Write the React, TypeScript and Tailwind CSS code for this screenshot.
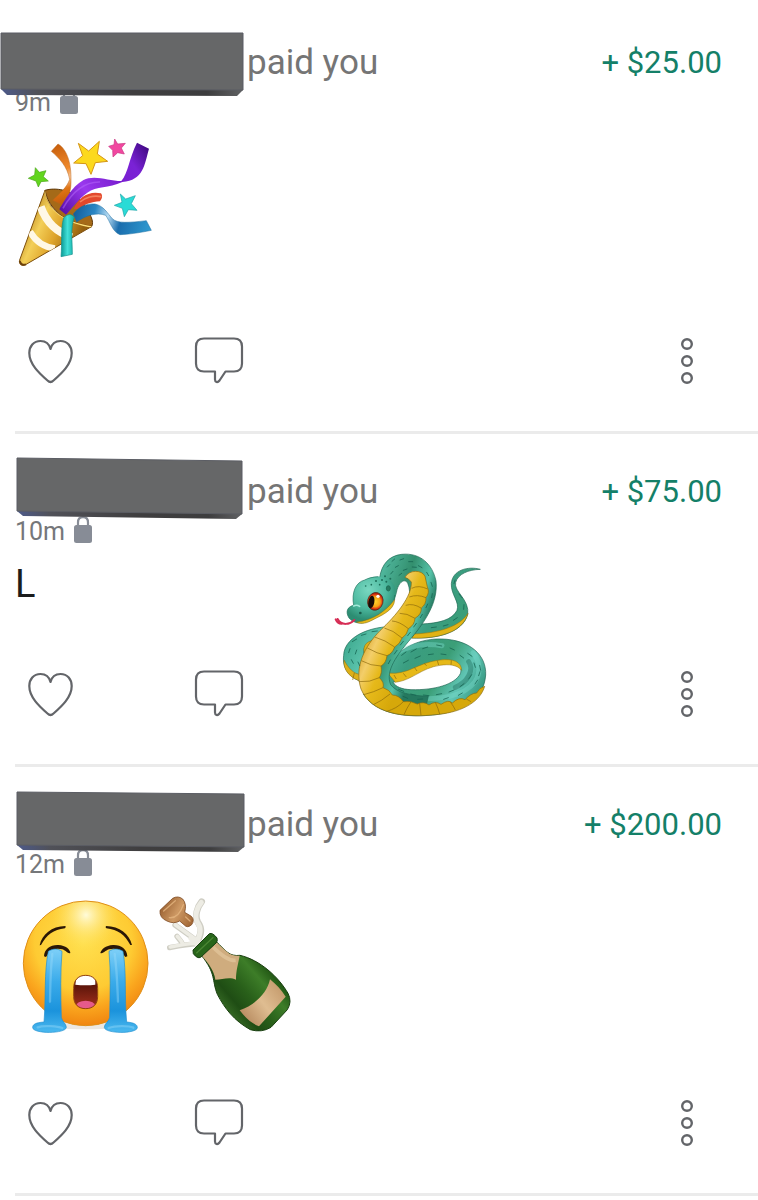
import React from 'react';

interface Payment {
  id: number;
  age: string;
  amount: string;
  message: React.ReactNode;
  redaction: React.ReactNode;
  sticker?: React.ReactNode;
}

const PartyPopper = () => (
  <svg role="img" aria-label="Party popper" width="141" height="144" viewBox="45 -3 423 432">
    <defs>
      <linearGradient id="cone" x1="70" y1="270" x2="230" y2="340" gradientUnits="userSpaceOnUse">
        <stop offset="0" stopColor="#b9831c" />
        <stop offset="0.3" stopColor="#f3cf58" />
        <stop offset="0.6" stopColor="#dfa52b" />
        <stop offset="1" stopColor="#94600f" />
      </linearGradient>
      <linearGradient id="orangeRibbon" x1="155" y1="50" x2="215" y2="230" gradientUnits="userSpaceOnUse">
        <stop offset="0" stopColor="#c85f0c" />
        <stop offset="0.4" stopColor="#f08a2c" />
        <stop offset="0.55" stopColor="#fbc89b" />
        <stop offset="0.7" stopColor="#e07414" />
        <stop offset="1" stopColor="#b65208" />
      </linearGradient>
      <linearGradient id="purpleRibbon" x1="180" y1="240" x2="440" y2="50" gradientUnits="userSpaceOnUse">
        <stop offset="0" stopColor="#5a10a8" />
        <stop offset="0.3" stopColor="#9a38ee" />
        <stop offset="0.6" stopColor="#7a1fd0" />
        <stop offset="0.8" stopColor="#7a22d6" />
        <stop offset="1" stopColor="#430a86" />
      </linearGradient>
      <linearGradient id="blueRibbon" x1="225" y1="240" x2="450" y2="300" gradientUnits="userSpaceOnUse">
        <stop offset="0" stopColor="#155f9c" />
        <stop offset="0.25" stopColor="#2a86c4" />
        <stop offset="0.43" stopColor="#b9dcf3" />
        <stop offset="0.6" stopColor="#1a6dad" />
        <stop offset="1" stopColor="#2f9ad0" />
      </linearGradient>
      <linearGradient id="tealRibbon" x1="185" y1="0" x2="220" y2="0" gradientUnits="userSpaceOnUse">
        <stop offset="0" stopColor="#0e9f9a" />
        <stop offset="0.5" stopColor="#43e0d8" />
        <stop offset="1" stopColor="#19b3ad" />
      </linearGradient>
      <clipPath id="coneClip">
        <path d="M135 181C140 235 185 275 276 289L75 405Q56 410 59 390Z" />
      </clipPath>
    </defs>
    <path d="M135 181C165 172 215 178 245 215C270 250 285 275 274 291C240 292 150 260 135 181Z" fill="#a56a18" stroke="#5d3708" strokeWidth="3" />
    <path d="M135 181C140 235 185 275 276 289L75 405Q56 410 59 390Z" fill="url(#cone)" stroke="#7d4e0c" strokeWidth="3" />
    <g clipPath="url(#coneClip)" fill="none" stroke="#fff8e6">
      <path d="M122 230C140 280 170 305 215 322" strokeWidth="24" />
      <path d="M90 305C110 340 135 352 165 355" strokeWidth="19" />
      <path d="M136 183C145 240 190 275 276 290" stroke="#ffe07a" strokeWidth="6" />
    </g>
    <path d="M59 393Q64 408 78 403" fill="none" stroke="#6d410c" strokeWidth="6" />
    <path d="M154 64L174 42C192 52 213 82 213 145C214 180 208 205 187 225L158 211C178 192 202 171 209 148C202 110 178 84 154 64Z" fill="url(#orangeRibbon)" stroke="#b8651b" strokeWidth="1.5" />
    <path d="M222 236C236 202 265 182 303 190Q311 200 300 214C275 215 252 224 234 238Z" fill="#e2482c" />
    <path d="M240 216C255 202 280 195 304 200" fill="none" stroke="#f5805c" strokeWidth="5" />
    <path d="M178 238C198 205 225 155 265 145C295 138 330 153 364 153C385 128 387 85 411 38L447 56C433 105 431 150 367 156C325 176 290 168 262 188C234 208 217 235 198 254Z" fill="url(#purpleRibbon)" />
    <path d="M189 235C220 180 255 155 300 156" fill="none" stroke="#bd70ff" strokeOpacity="0.45" strokeWidth="5" />
    <path d="M220 252C235 230 260 220 285 222C312 228 322 250 337 266C352 281 385 278 439 272L454 301C415 309 385 313 360 314C337 306 331 275 317 256C290 246 258 256 230 276Z" fill="url(#blueRibbon)" stroke="#176a9f" strokeWidth="1.5" />
    <path d="M191 263Q209 245 223 261C211 295 217 330 217 373L183 380C187 337 181 300 191 263Z" fill="url(#tealRibbon)" stroke="#13908b" strokeWidth="2" />
    <path d="M235 40L266 63L298 34L292 72L323 94L286 98L273 133L258 101L221 99L248 77Z" fill="#fcd91d" stroke="#d59616" strokeWidth="3" strokeLinejoin="round" />
    <path d="M344 27L353 42L376 40L364 54L373 72L353 68L339 81L338 61L326 49L342 44Z" fill="#f147a0" stroke="#c93682" strokeWidth="2" strokeLinejoin="round" />
    <path d="M106 113L118 127L138 122L130 140L145 153L123 155L115 171L108 153L85 145L104 135Z" fill="#62d51e" stroke="#48a317" strokeWidth="2" strokeLinejoin="round" />
    <path d="M361 192L377 207L406 197L394 221L411 241L385 239L373 260L367 235L343 226L366 217Z" fill="#2adbd6" stroke="#1aa3a6" strokeWidth="2" strokeLinejoin="round" />
  </svg>
);

const CryingFace = () => (
  <svg role="img" aria-label="Loudly crying face" width="141" height="144" viewBox="45 18 423 432">
    <defs>
      <radialGradient id="face" cx="250" cy="170" r="265" gradientUnits="userSpaceOnUse">
        <stop offset="0" stopColor="#ffe04f" />
        <stop offset="0.55" stopColor="#fecb33" />
        <stop offset="0.75" stopColor="#faa61e" />
        <stop offset="1" stopColor="#ee7d0c" />
      </radialGradient>
      <radialGradient id="shine" cx="258" cy="90" r="105" gradientUnits="userSpaceOnUse">
        <stop offset="0" stopColor="#fffbd9" />
        <stop offset="1" stopColor="#ffe04f" stopOpacity="0" />
      </radialGradient>
      <linearGradient id="tear" x1="0" y1="190" x2="0" y2="440" gradientUnits="userSpaceOnUse">
        <stop offset="0" stopColor="#7fd0f8" />
        <stop offset="0.4" stopColor="#3aabea" />
        <stop offset="0.75" stopColor="#1b93dc" />
        <stop offset="1" stopColor="#4ab8ef" />
      </linearGradient>
      <linearGradient id="mouth" x1="0" y1="270" x2="0" y2="372" gradientUnits="userSpaceOnUse">
        <stop offset="0.3" stopColor="#5c150a" />
        <stop offset="1" stopColor="#a8321e" />
      </linearGradient>
      <clipPath id="mouthClip">
        <path d="M221 310C221 284 236 271 257 271S293 284 293 310V334C293 358 279 371 257 371S221 358 221 334Z" />
      </clipPath>
    </defs>
    <ellipse cx="257" cy="421" rx="120" ry="12" fill="#d9cfc4" opacity="0.5" />
    <circle cx="257" cy="235" r="187" fill="url(#face)" />
    <circle cx="257" cy="235" r="187" fill="url(#shine)" stroke="#df8f18" strokeWidth="3" />
    <g fill="#2b1706">
      <path d="M119 181C126 148 155 124 196 123Q199 126 195 130C160 134 140 150 123 180Z" />
      <path d="M396 180C388 147 359 124 318 123Q315 127 319 130C354 134 375 150 391 180Z" />
      <path d="M132 214C133 192 151 179 175 180C197 181 211 194 211 204C203 207 200 198 187 193C165 187 151 195 138 216Z" />
      <path d="M382 214C381 192 363 179 339 180C317 181 303 194 301 204C309 207 314 198 327 193C349 187 363 195 376 216Z" />
    </g>
    <path d="M145 199C160 190 173 190 186 199C181 260 182 330 184 397C186 410 199 416 199 427C198 447 99 447 98 428C98 417 108 413 132 411C138 340 132 260 145 199Z" fill="url(#tear)" stroke="#218fd0" strokeWidth="2" />
    <path d="M369 199C354 190 340 190 327 199C333 260 330 330 329 397C327 410 313 416 313 427C314 447 411 447 412 428C412 417 400 413 380 411C373 340 380 260 369 199Z" fill="url(#tear)" stroke="#218fd0" strokeWidth="2" />
    <g fill="none" stroke="#9bdcfb" strokeWidth="7" strokeLinecap="round" opacity="0.4">
      <path d="M157 207C151 255 151 300 150 350" />
      <path d="M344 207C351 255 352 300 354 350" />
      <path d="M113 427C130 420 175 424 187 429" />
      <path d="M326 429C345 422 385 421 400 428" />
    </g>
    <g clipPath="url(#mouthClip)">
      <rect x="218" y="268" width="80" height="106" fill="url(#mouth)" />
      <ellipse cx="257" cy="364" rx="29" ry="17" fill="#e65a8a" />
      <path d="M230 270H286V299Q257 303 226 299Z" fill="#fff" />
    </g>
    <path d="M221 310C221 284 236 271 257 271S293 284 293 310V334C293 358 279 371 257 371S221 358 221 334Z" fill="none" stroke="#94450d" strokeWidth="3" />
  </svg>
);

const ChampagneBottle = () => (
  <svg role="img" aria-label="Bottle with popping cork" width="141" height="144" viewBox="468 18 423 432">
    <defs>
      <linearGradient id="glass" x1="660" y1="370" x2="800" y2="250" gradientUnits="userSpaceOnUse">
        <stop offset="0" stopColor="#3a6f27" />
        <stop offset="0.25" stopColor="#1f4d14" />
        <stop offset="0.5" stopColor="#29601a" />
        <stop offset="0.8" stopColor="#3d7d28" />
        <stop offset="1" stopColor="#245a16" />
      </linearGradient>
      <linearGradient id="label" x1="730" y1="400" x2="850" y2="310" gradientUnits="userSpaceOnUse">
        <stop offset="0" stopColor="#b78b60" />
        <stop offset="0.5" stopColor="#dfbd91" />
        <stop offset="1" stopColor="#c49a6c" />
      </linearGradient>
      <linearGradient id="cork" x1="485" y1="60" x2="575" y2="110" gradientUnits="userSpaceOnUse">
        <stop offset="0" stopColor="#9b6232" />
        <stop offset="0.5" stopColor="#cd9863" />
        <stop offset="1" stopColor="#a46a38" />
      </linearGradient>
    </defs>
    <g fill="none" strokeLinecap="round" strokeLinejoin="round">
      <g stroke="#cfcec4">
        <path d="M597 172C567 150 545 134 525 120M594 176C560 178 535 183 509 188M548 178C543 167 536 160 531 154" strokeWidth="16" />
        <path d="M593 168C604 145 607 130 594 112C583 93 592 66 605 50" strokeWidth="20" />
      </g>
      <g stroke="#edece4">
        <path d="M597 170C567 149 545 133 526 119M594 174C560 176 535 181 511 186M548 176C543 165 536 159 532 154M570 160L596 186" strokeWidth="11" />
        <path d="M592 167C602 145 605 130 592 112C582 93 591 67 604 52" strokeWidth="15" />
      </g>
    </g>
    <path d="M480 76L518 40Q534 31 548 42Q561 57 554 82L574 94Q585 105 575 119Q562 131 552 119L539 108Q521 118 501 108Q478 99 480 76Z" fill="url(#cork)" stroke="#7f4c24" strokeWidth="2.5" strokeLinejoin="round" />
    <g fill="none" stroke="#e5b580" strokeWidth="4" strokeLinecap="round" opacity="0.8">
      <path d="M491 78L526 47M508 98C529 100 542 82 550 59M557 96L570 108" />
    </g>
    <path d="M604 211L649 170C678 198 688 215 720 211C780 225 835 275 864 325Q877 350 862 374L813 427Q785 444 751 434C702 407 674 370 652 328C635 285 649 267 604 211Z" fill="url(#glass)" stroke="#193f10" strokeWidth="3" />
    <path d="M606 212L650 172C678 199 692 216 719 212C714 239 708 257 708 284C688 274 666 284 646 284C643 255 622 233 606 212Z" fill="#cfac7e" />
    <path d="M640 187C667 214 690 228 707 226" fill="none" stroke="#ebd1aa" strokeWidth="11" opacity="0.5" />
    <path d="M810 283C829 298 844 315 857 335L777 424C752 414 735 397 719 376C765 360 801 325 810 283Z" fill="url(#label)" />
    <path d="M579 195L628 146Q638 142 651 159Q654 168 648 174L602 217Q592 222 580 206Z" fill="#28651a" stroke="#173f10" strokeWidth="3" strokeLinejoin="round" />
    <path d="M589 205L640 157" fill="none" stroke="#4b8633" strokeWidth="4" />
  </svg>
);

const Snake = () => (
  <svg role="img" aria-label="Snake" width="175" height="180" viewBox="0 0 525 540">
    <defs>
      <linearGradient id="body" x1="60" y1="250" x2="480" y2="480" gradientUnits="userSpaceOnUse">
        <stop offset="0" stopColor="#36a287" />
        <stop offset="0.2" stopColor="#5cc4ad" />
        <stop offset="0.45" stopColor="#3a9d80" />
        <stop offset="0.65" stopColor="#3b9e77" />
        <stop offset="0.8" stopColor="#60c5b4" />
        <stop offset="1" stopColor="#23846a" />
      </linearGradient>
      <linearGradient id="neck" x1="150" y1="90" x2="335" y2="150" gradientUnits="userSpaceOnUse">
        <stop offset="0" stopColor="#55bea5" />
        <stop offset="0.5" stopColor="#338f6e" />
        <stop offset="0.8" stopColor="#56c3a9" />
        <stop offset="1" stopColor="#25795f" />
      </linearGradient>
      <linearGradient id="belly" x1="110" y1="240" x2="270" y2="310" gradientUnits="userSpaceOnUse">
        <stop offset="0" stopColor="#c98e08" />
        <stop offset="0.35" stopColor="#f3ce6a" />
        <stop offset="0.6" stopColor="#e6b91a" />
        <stop offset="1" stopColor="#d6a80a" />
      </linearGradient>
      <radialGradient id="head" cx="130" cy="135" r="90" gradientUnits="userSpaceOnUse">
        <stop offset="0" stopColor="#79d8c1" />
        <stop offset="0.6" stopColor="#4db99f" />
        <stop offset="1" stopColor="#2c8d72" />
      </radialGradient>
      <radialGradient id="iris" cx="151" cy="170" r="27" gradientUnits="userSpaceOnUse">
        <stop offset="0" stopColor="#ffd52b" />
        <stop offset="0.55" stopColor="#f5a316" />
        <stop offset="0.8" stopColor="#dd3511" />
        <stop offset="1" stopColor="#8d170a" />
      </radialGradient>
    </defs>

    {/* tail */}
    <path d="M466 73C430 63 382 74 379 116C377 148 405 171 396 196C382 225 340 235 290 237L260 279C335 282 412 264 428 209C435 163 385 140 392 112C399 87 430 74 466 73Z" fill="url(#body)" stroke="#1d6751" strokeWidth="2" />
    <path d="M260 279C335 282 414 264 429 205C405 245 340 264 267 267Z" fill="#e1b315" stroke="#94710d" strokeWidth="1.5" />

    {/* left coil */}
    <path d="M230 246C150 237 58 270 56 331C50 374 80 402 112 410L125 350C108 315 117 292 150 287L240 285Z" fill="url(#body)" stroke="#1c6752" strokeWidth="2" />
    <path d="M57 345C70 369 85 387 109 389L115 411C77 402 53 376 57 345ZM125 341C107 309 119 286 155 285L177 292C145 295 125 311 130 340Z" fill="#ddb018" stroke="#8b6a10" strokeWidth="1.5" />

    {/* right coil */}
    <path fillRule="evenodd" d="M190 366C220 305 290 280 350 282C434 284 485 330 482 390C477 460 420 495 340 508C250 520 155 510 115 447L160 350ZM204 412C252 401 290 363 345 355C390 345 415 363 406 386C390 418 330 436 258 434C230 433 212 425 204 412Z" fill="url(#body)" stroke="#1a614e" strokeWidth="2" />
    <path d="M188 384C248 392 278 352 345 345C384 340 409 350 410 376C396 359 371 357 345 361C288 369 262 406 211 412Z" fill="#e6b918" stroke="#8f6f0e" strokeWidth="1.5" />
    <path d="M212 325C255 300 302 293 351 302M444 323C466 350 467 385 450 410C420 452 344 470 248 457" fill="none" stroke="#7adccd" strokeWidth="15" strokeLinecap="round" opacity="0.4" />
    <path d="M431 350C448 374 429 411 391 427" fill="none" stroke="#135c4a" strokeWidth="15" strokeLinecap="round" opacity="0.35" />

    {/* neck and head */}
    <path d="M164 98C170 57 193 32 230 28C288 22 323 60 333 108C340 173 299 233 250 290C220 326 179 377 197 419C215 444 260 452 310 454L300 496C220 505 142 488 121 418C102 342 180 290 230 223C252 191 261 145 248 114C238 99 220 111 214 143L208 164Z" fill="url(#neck)" stroke="#1b6651" strokeWidth="2" />
    <path d="M72 219C59 198 70 184 86 181C79 142 92 112 119 105C151 86 200 94 209 126C221 160 195 191 158 212C127 236 93 243 72 219Z" fill="url(#head)" />
    <path d="M209 150C210 185 170 207 158 212C127 236 93 243 72 219C59 198 70 184 86 181C79 142 92 112 119 105C130 99 145 96 160 95" fill="none" stroke="#23735e" strokeWidth="2" />
    <path d="M94 231C145 226 181 199 209 164C208 198 164 213 137 228C119 237 104 237 94 231Z" fill="#e5b817" stroke="#806b17" strokeWidth="1.5" />

    {/* belly plates */}
    <path d="M240 97C253 73 291 74 300 94L307 125Q315 143 303 158Q304 177 289 189Q290 208 270 220Q269 240 250 251Q246 270 231 279Q225 297 209 306Q202 326 186 332Q183 355 168 363Q172 384 163 398Q179 413 174 428Q194 434 202 450Q221 450 235 470Q256 466 277 477Q296 468 312 480Q330 466 348 478Q371 462 382 474Q403 454 420 464Q438 444 455 444Q463 428 479 424C466 469 414 500 342 508C235 521 138 505 108 432C87 366 119 304 165 257C214 211 261 154 259 111Q250 99 240 97Z" fill="url(#belly)" stroke="#8b690c" strokeWidth="2" strokeLinejoin="round" />
    <g fill="none" stroke="#8b680b" strokeWidth="2">
      <path d="M260 130Q281 119 308 132M253 156Q277 147 303 158M242 181Q264 174 288 189M224 205Q245 204 270 220M201 228Q223 229 250 251M178 249Q204 255 231 279M149 276Q181 285 209 306M127 309Q156 326 186 332M109 347Q137 363 168 363M101 410Q134 413 163 398M116 449Q145 442 174 428M145 479Q170 468 195 447M185 499Q215 491 235 470M237 509Q243 493 258 470M288 511L284 475M344 507Q340 491 331 472M391 495Q386 484 376 471M438 470L424 462" />
      <path d="M83 405L88 384M214 402L207 390M244 396L235 385M276 378L268 367M305 362L297 355M341 360L337 347M378 359L379 346" />
    </g>

    {/* scales */}
    <g fill="none" stroke="#14624f" strokeWidth="3" strokeLinecap="round" opacity="0.75">
      <path d="M201 49L209 42M225 45L236 41M251 50L263 50M280 62L291 68M187 66L194 59M211 67L220 62M235 76L246 72M262 66L274 67M197 87L204 79M222 91L230 85M305 82L311 92M318 112L322 124M322 146L320 158M308 177L303 188M292 208L286 218M274 235L266 246M256 262L248 272M235 289L226 300M216 316L208 327M196 345L190 356" />
      <path d="M95 282L82 290M123 267L109 271M157 258L141 260M75 311L71 323M95 315L91 327M79 344L85 355M99 351L104 362M390 105L387 116M402 147L411 158M417 179L416 193M397 218L385 226M369 239L355 243M334 246L319 248" />
      <path d="M230 331L243 321M258 321L274 312M293 311L308 306M335 300L350 303M375 309L388 315M405 331L416 339M428 325L441 334M447 354L451 367M464 361L467 376M235 354L250 346M270 340L286 333M310 329L325 327M348 327L363 329M221 433L236 439M257 447L273 451M295 450L312 452M334 449L350 446M372 441L387 435M405 425L417 416M431 402L440 389M450 417L458 405M234 454L248 460M278 463L293 462M356 463L370 458M400 451L412 444M461 392L465 380" />
    </g>
    <g fill="#1d6f5a">
      <circle cx="153" cy="108" r="3" /><circle cx="171" cy="105" r="3" /><circle cx="164" cy="119" r="2.5" />
      <circle cx="184" cy="110" r="3" /><circle cx="180" cy="94" r="3" /><circle cx="196" cy="101" r="3" />
      <circle cx="122" cy="123" r="2.5" /><circle cx="139" cy="119" r="2.5" />
    </g>
    <ellipse cx="190" cy="130" rx="6" ry="8" fill="#267b60" stroke="#175c48" strokeWidth="2" />
    <ellipse cx="151" cy="169" rx="23" ry="27" transform="rotate(15 151 169)" fill="url(#iris)" stroke="#4d2617" strokeWidth="2" />
    <ellipse cx="139" cy="171" rx="9" ry="19" transform="rotate(10 139 171)" fill="#170d08" />
    <circle cx="159" cy="154" r="5" fill="#fff" />
    <circle cx="106" cy="204" r="4" fill="#185c4b" />
    <path d="M86 183Q95 178 104 184" fill="none" stroke="#a2e9d8" strokeWidth="5" strokeLinecap="round" />
    <path d="M88 225C75 239 49 243 38 222M51 236Q38 237 32 223" fill="none" stroke="#d62d55" strokeWidth="6" strokeLinecap="round" />
  </svg>
);

const HeartIcon = () => (
  <svg width="48" height="48" viewBox="0 0 48 48" fill="none" stroke="#636569" strokeWidth="2.2" strokeLinejoin="round" strokeLinecap="round" aria-hidden="true">
    <path d="M23.5 12C22 6 18 4 13.5 4C6.500 4 2.300 9.500 2.300 16C2.300 27 12 36 20.500 43.500Q23.500 46.500 26.500 43.500C35 36 44.700 27 44.700 16C44.700 9.500 40.500 4 33.500 4C29 4 25 6 23.500 12Z" />
  </svg>
);

const CommentIcon = () => (
  <svg width="52" height="48" viewBox="0 0 52 48" fill="none" stroke="#636569" strokeWidth="2.2" strokeLinejoin="round" aria-hidden="true">
    <path d="M11 1.500H41Q49 1.500 49 9.500V26.500Q49 34.500 41 34.500H32.500L26.500 43.500Q25 45.500 23.500 45Q22 44.500 22 42.500V34.500H11Q3 34.500 3 26.500V9.500Q3 1.500 11 1.500Z" />
  </svg>
);

const MoreIcon = () => (
  <svg width="24" height="48" viewBox="0 0 24 48" fill="none" stroke="#636569" strokeWidth="2.4" aria-hidden="true">
    <circle cx="12" cy="7" r="4.800" />
    <circle cx="12" cy="24" r="4.800" />
    <circle cx="12" cy="41" r="4.800" />
  </svg>
);

const LockIcon = () => (
  <svg width="18" height="27" viewBox="0 0 18 27" aria-label="Private" role="img">
    <path d="M4 11V6.500C4 3 6 1.200 9 1.200S14 3 14 6.500V11" fill="none" stroke="#878c96" strokeWidth="2.2" />
    <rect y="9" width="18" height="18" rx="2.500" fill="#878c96" />
  </svg>
);

// Slab that hides the payer's name: front face plus the bevel underneath
const Slab = ({ id, front, bevel, className }: { id: string; front: string; bevel: string; className: string }) => (
  <svg className={`absolute ${className}`} width="246" height="66" viewBox="0 0 246 66" aria-hidden="true">
    <defs>
      <linearGradient id={id} x1="0" y1="0" x2="1" y2="0">
        <stop offset="0" stopColor="#4d5a8a" />
        <stop offset="0.15" stopColor="#505158" />
        <stop offset="0.55" stopColor="#3f3e3f" />
        <stop offset="0.85" stopColor="#3d3d3e" />
        <stop offset="1" stopColor="#606163" />
      </linearGradient>
    </defs>
    <path d={bevel} fill={`url(#${id})`} />
    <path d={front} fill="#666768" stroke="#5b5d64" strokeWidth="1" />
  </svg>
);

const payments: Payment[] = [
  {
    id: 1,
    age: '9m',
    amount: '+ $25.00',
    message: <PartyPopper />,
    redaction: <Slab id="slab1" className="-left-[15px] -top-[7px]" front="M1 1L243 1V58L1 57Z" bevel="M1 56L243 57V58L237 64L7 63L1 57Z" />,
  },
  {
    id: 2,
    age: '10m',
    amount: '+ $75.00',
    message: 'L',
    redaction: <Slab id="slab2" className="-left-[15px] -top-[11px]" front="M17 1L242 4V57L17 54Z" bevel="M17 53L242 56V57L236 62L23 59L17 54Z" />,
    sticker: <Snake />,
  },
  {
    id: 3,
    age: '12m',
    amount: '+ $200.00',
    message: (
      <>
        <CryingFace />
        <ChampagneBottle />
      </>
    ),
    redaction: <Slab id="slab3" className="-left-[15px] -top-[10px]" front="M17 1L244 3V56L17 54Z" bevel="M17 53L244 55V56L238 61L23 59L17 54Z" />,
  },
];

const PaymentItem: React.FC<{ payment: Payment }> = ({ payment }) => {
  const isText = typeof payment.message === 'string';

  return (
    <li className="relative ml-[15px] border-b-3 border-[#ebebeb] pt-[34px] pb-[46px]">
      <div className="relative flex items-center justify-between pr-9">
        <div className="flex items-center">
          <span className="w-[232px]" />
          <span className="text-[35px] leading-[48px] text-[#757575]">paid you</span>
        </div>
        <span className="text-[31px] leading-[48px] text-[#148068]">{payment.amount}</span>
        <div className="absolute left-0 top-0">{payment.redaction}</div>
      </div>
      <div className="flex items-start gap-[9px] text-[25px] leading-8 text-[#75777a]">
        <time>{payment.age}</time>
        <LockIcon />
      </div>
      {isText ? (
        <p className="mt-3 mb-[62px] text-[38px] leading-[48px] text-[#1c1c1c]">{payment.message}</p>
      ) : (
        <div className="mt-[10px] mb-16 flex">{payment.message}</div>
      )}
      <div className="flex items-center pl-3 pr-[59px]">
        <button type="button" aria-label="Like" className="mr-[118px]">
          <HeartIcon />
        </button>
        <button type="button" aria-label="Comment">
          <CommentIcon />
        </button>
        <button type="button" aria-label="More options" className="ml-auto">
          <MoreIcon />
        </button>
      </div>
      {payment.sticker && <div className="absolute left-[310px] top-[111px]">{payment.sticker}</div>}
    </li>
  );
};

const App: React.FC = () => (
  <main className="min-h-screen overflow-x-hidden bg-white pt-[5px] font-['Roboto',sans-serif]">
    <ul>
      {payments.map((p) => (
        <PaymentItem key={p.id} payment={p} />
      ))}
    </ul>
  </main>
);

export default App;
